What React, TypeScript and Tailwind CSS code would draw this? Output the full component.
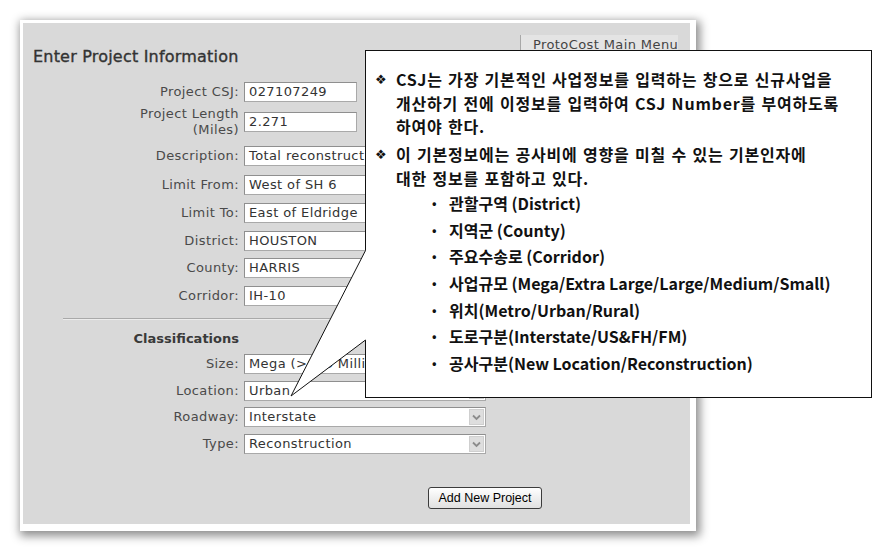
import React from "react";

function Chevron() {
  return (
    <svg width="9" height="7" viewBox="0 0 9 7">
      <path d="M1 1.5 L4.5 5 L8 1.5" fill="none" stroke="#8c8c8c" strokeWidth="1.8" />
    </svg>
  );
}

function Field({ value, w }: { value: string; w: string }) {
  return (
    <div
      className={`${w} h-[20px] bg-white border border-[#a9a9a9] border-t-[#8f8f8f] border-l-[#8f8f8f] pl-[4px] text-[13px] leading-[18px] text-[#333] tracking-[0.4px] whitespace-nowrap overflow-hidden`}
    >
      {value}
    </div>
  );
}

function Select({ value }: { value: string }) {
  return (
    <div className="w-[242px] h-[20px] bg-white border border-[#a9a9a9] border-t-[#8f8f8f] border-l-[#8f8f8f] flex items-stretch">
      <div className="flex-1 pl-[4px] text-[13px] leading-[18px] text-[#333] tracking-[0.4px] whitespace-nowrap overflow-hidden">
        {value}
      </div>
      <div className="w-[15px] my-[1px] mr-[1px] bg-[#dedede] border border-[#cfcfcf] flex items-center justify-center">
        <Chevron />
      </div>
    </div>
  );
}

function Row({ label, children, mt }: { label: React.ReactNode; children: React.ReactNode; mt: string }) {
  return (
    <div className={`flex items-center ${mt}`}>
      <div className="w-[216px] text-right text-[13px] leading-[16px] text-[#4a4a4a] tracking-[0.4px] whitespace-nowrap">
        {label}
      </div>
      <div className="ml-[5px]">{children}</div>
    </div>
  );
}

const bullets = [
  "관할구역 (District)",
  "지역군 (County)",
  "주요수송로 (Corridor)",
  "사업규모 (Mega/Extra Large/Large/Medium/Small)",
  "위치(Metro/Urban/Rural)",
  "도로구분(Interstate/US&FH/FM)",
  "공사구분(New Location/Reconstruction)",
];

export default function App() {
  return (
    <div className="relative w-[874px] h-[552px] bg-white overflow-hidden font-['DejaVu_Sans',sans-serif]">
      <div className="ml-[20px] pt-[20px]">
        <div className="w-[676px] h-[511px] border-l-[3px] border-t-[3px] border-r-[6px] border-b-[7px] border-white bg-white shadow-[2px_3px_9px_2px_rgba(0,0,0,0.45)]">
          <div className="w-full h-full bg-[#d9d9d9] flex flex-col">
            <div className="h-[59px] flex justify-between items-start">
              <div className="ml-[10px] mt-[24px] text-[16px] leading-[20px] tracking-[0.2px] text-[#333] [-webkit-text-stroke:0.35px_#333]">
                Enter Project Information
              </div>
              <div className="mt-[12px] mr-[12px] w-[158px] h-[20px] bg-[#e4e4e4] border-l border-[#a8a8a8] pl-[12px] text-[13px] leading-[20px] text-[#444] tracking-[0.4px] whitespace-nowrap">
                ProtoCost Main Menu
              </div>
            </div>

            <Row label="Project CSJ:" mt="mt-0">
              <Field value="027107249" w="w-[113px]" />
            </Row>
            <Row
              label={
                <>
                  Project Length
                  <br />
                  (Miles)
                </>
              }
              mt="mt-[4px]"
            >
              <Field value="2.271" w="w-[113px]" />
            </Row>
            <Row label="Description:" mt="mt-[8px]">
              <Field value="Total reconstruction" w="w-[242px]" />
            </Row>
            <Row label="Limit From:" mt="mt-[9px]">
              <Field value="West of SH 6" w="w-[242px]" />
            </Row>
            <Row label="Limit To:" mt="mt-[8px]">
              <Field value="East of Eldridge" w="w-[242px]" />
            </Row>
            <Row label="District:" mt="mt-[8px]">
              <Field value="HOUSTON" w="w-[242px]" />
            </Row>
            <Row label="County:" mt="mt-[7px]">
              <Field value="HARRIS" w="w-[242px]" />
            </Row>
            <Row label="Corridor:" mt="mt-[8px]">
              <Field value="IH-10" w="w-[242px]" />
            </Row>

            <div className="mt-[12px] ml-[40px] w-[446px] border-t border-[#a9a9a9] border-b border-b-[#ececec]" />

            <div className="flex mt-[10px]">
              <div className="w-[216px] text-right text-[13px] leading-[18px] font-bold text-[#3a3a3a]">
                Classifications
              </div>
            </div>

            <Row label="Size:" mt="mt-[6px]">
              <Select value="Mega (>$50 Million)" />
            </Row>
            <Row label="Location:" mt="mt-[7px]">
              <Select value="Urban" />
            </Row>
            <Row label="Roadway:" mt="mt-[6px]">
              <Select value="Interstate" />
            </Row>
            <Row label="Type:" mt="mt-[7px]">
              <Select value="Reconstruction" />
            </Row>

            <div className="mt-[31px] pl-[405px]">
              <button className="w-[114px] h-[22px] rounded-[3px] border border-[#3c3c3c] bg-linear-to-b from-white to-[#e0e0e0] text-[12.5px] leading-[20px] text-black font-['Liberation_Sans',sans-serif]">
                Add New Project
              </button>
            </div>
          </div>
        </div>
      </div>

      <div className="absolute left-[365px] top-[50px] w-[507px] h-[348px] bg-white border border-[#111] font-['Noto_Sans_CJK_KR',sans-serif] font-bold text-[16px] text-[#111] pt-[17px]">
        <div className="flex pl-[9px]">
          <span className="w-[21px] shrink-0 text-[13px] leading-[23.5px] font-normal font-['DejaVu_Sans',sans-serif]">❖</span>
          <div className="leading-[23.5px] whitespace-nowrap tracking-[0.8px] [word-spacing:1px]">
            CSJ는 가장 기본적인 사업정보를 입력하는 창으로 신규사업을
            <br />
            개산하기 전에 이정보를 입력하여 CSJ Number를 부여하도록
            <br />
            하여야 한다.
          </div>
        </div>
        <div className="flex pl-[9px] mt-[4.5px]">
          <span className="w-[21px] shrink-0 text-[13px] leading-[23.5px] font-normal font-['DejaVu_Sans',sans-serif]">❖</span>
          <div className="leading-[23.5px] whitespace-nowrap tracking-[0.8px] [word-spacing:1px]">
            이 기본정보에는 공사비에 영향을 미칠 수 있는 기본인자에
            <br />
            대한 정보를 포함하고 있다.
          </div>
        </div>
        <div className="pl-[66px]">
          {bullets.map((b) => (
            <div key={b} className="flex leading-[26.67px] whitespace-nowrap">
              <span className="w-[17px] shrink-0 text-[12px]">•</span>
              <span>{b}</span>
            </div>
          ))}
        </div>
      </div>

      <svg className="absolute left-0 top-0 pointer-events-none" width="874" height="552" viewBox="0 0 874 552">
        <polygon points="291,396 365.5,250.5 367,250.5 367,340 365.5,340" fill="white" />
        <path d="M365.5 250.5 L291 396 L365.5 340" fill="none" stroke="#111" strokeWidth="1" />
      </svg>
    </div>
  );
}
